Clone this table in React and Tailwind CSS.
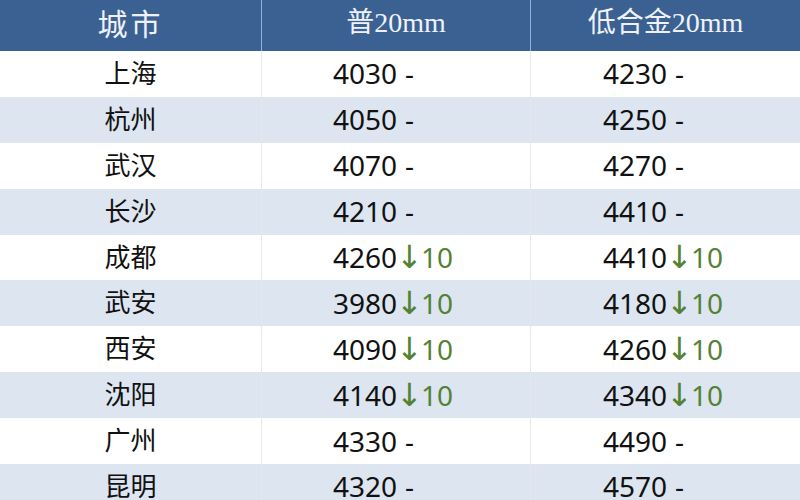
import React from "react";

const rows = [
  { city: "上海", a: "4030", b: "4230", down: false },
  { city: "杭州", a: "4050", b: "4250", down: false },
  { city: "武汉", a: "4070", b: "4270", down: false },
  { city: "长沙", a: "4210", b: "4410", down: false },
  { city: "成都", a: "4260", b: "4410", down: true },
  { city: "武安", a: "3980", b: "4180", down: true },
  { city: "西安", a: "4090", b: "4260", down: true },
  { city: "沈阳", a: "4140", b: "4340", down: true },
  { city: "广州", a: "4330", b: "4490", down: false },
  { city: "昆明", a: "4320", b: "4570", down: false },
];

const numFont = { fontFamily: '"Noto Sans", "Open Sans", sans-serif' };
const cjkFont = { fontFamily: '"Noto Sans CJK SC", sans-serif' };
const headFont = { fontFamily: '"Liberation Serif", "Noto Sans CJK SC", serif' };

// price with change marker: "-" when flat, green ↓10 when it dropped
const Price = ({ value, down }) => (
  <span className="flex items-center text-[28px] text-[#111]" style={numFont}>
    {value}
    {down ? (
      <span className="flex items-center text-[#548235]">
        <span
          className="-ml-[1px] -mr-[2px] text-[32px] leading-none"
          style={{ fontFamily: '"DejaVu Sans", sans-serif' }}
        >
          ↓
        </span>
        10
      </span>
    ) : (
      <span className="ml-[8px]">-</span>
    )}
  </span>
);

const App = () => {
  return (
    <div className="w-[800px] h-[500px] overflow-hidden bg-white">
      {/* header */}
      <div className="flex h-[51px] bg-[#3b6192] text-[#eef2f8]">
        <div
          className="w-[262px] flex items-center justify-center pb-[6px] text-[30px] tracking-[3px] border-r border-[#8fb0d8]"
          style={cjkFont}
        >
          城市
        </div>
        <div
          className="w-[269px] flex items-center justify-center pb-[6px] text-[28px] border-r border-[#8fb0d8]"
          style={headFont}
        >
          普20mm
        </div>
        <div
          className="flex-1 flex items-center justify-center pb-[6px] text-[28px]"
          style={headFont}
        >
          低合金20mm
        </div>
      </div>

      {/* rows */}
      {rows.map((r, i) => (
        <div
          key={r.city}
          className={
            "flex h-[45.9px] " + (i % 2 === 1 ? "bg-[#dce5f0]" : "bg-white")
          }
        >
          <div
            className="w-[262px] flex items-center justify-center pb-[5px] text-[26px] text-[#111] border-r border-[#e4e8ee]"
            style={cjkFont}
          >
            {r.city}
          </div>
          <div className="w-[269px] flex items-center pl-[71px] pb-[1px] border-r border-[#e4e8ee]">
            <Price value={r.a} down={r.down} />
          </div>
          <div className="flex-1 flex items-center pl-[72px] pb-[1px]">
            <Price value={r.b} down={r.down} />
          </div>
        </div>
      ))}
    </div>
  );
};

export default App;
